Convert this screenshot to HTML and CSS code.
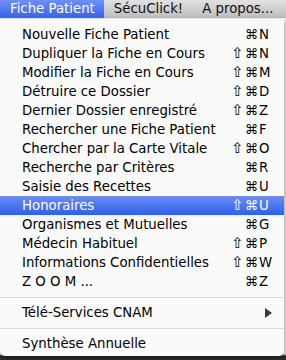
FILE: index.html
```html
<!DOCTYPE html>
<html lang="fr">
<head>
<meta charset="utf-8">
<title>Fiche Patient</title>
<link rel="stylesheet" href="styles.css">
</head>
<body>
<div class="menubar">
  <div class="bar-item active">Fiche Patient</div>
  <div class="bar-item">SécuClick!</div>
  <div class="bar-item">A propos...</div>
</div>
<div class="menu">
  <div class="row"><span class="label">Nouvelle Fiche Patient</span><span class="mods">⌘</span><span class="key">N</span></div>
  <div class="row"><span class="label">Dupliquer la Fiche en Cours</span><span class="mods"><span class="shift">⇧</span>⌘</span><span class="key">N</span></div>
  <div class="row"><span class="label">Modifier la Fiche en Cours</span><span class="mods"><span class="shift">⇧</span>⌘</span><span class="key">M</span></div>
  <div class="row"><span class="label">Détruire ce Dossier</span><span class="mods"><span class="shift">⇧</span>⌘</span><span class="key">D</span></div>
  <div class="row"><span class="label">Dernier Dossier enregistré</span><span class="mods"><span class="shift">⇧</span>⌘</span><span class="key">Z</span></div>
  <div class="row"><span class="label">Rechercher une Fiche Patient</span><span class="mods">⌘</span><span class="key">F</span></div>
  <div class="row"><span class="label">Chercher par la Carte Vitale</span><span class="mods"><span class="shift">⇧</span>⌘</span><span class="key">O</span></div>
  <div class="row"><span class="label">Recherche par Critères</span><span class="mods">⌘</span><span class="key">R</span></div>
  <div class="row"><span class="label">Saisie des Recettes</span><span class="mods">⌘</span><span class="key">U</span></div>
  <div class="row selected"><span class="label">Honoraires</span><span class="mods"><span class="shift">⇧</span>⌘</span><span class="key">U</span></div>
  <div class="row"><span class="label">Organismes et Mutuelles</span><span class="mods">⌘</span><span class="key">G</span></div>
  <div class="row"><span class="label">Médecin Habituel</span><span class="mods"><span class="shift">⇧</span>⌘</span><span class="key">P</span></div>
  <div class="row"><span class="label">Informations Confidentielles</span><span class="mods"><span class="shift">⇧</span>⌘</span><span class="key">W</span></div>
  <div class="row"><span class="label">Z O O M ...</span><span class="mods">⌘</span><span class="key">Z</span></div>
  <div class="sep"></div>
  <div class="row"><span class="label">Télé-Services CNAM</span><svg class="arrow" width="7" height="10" viewBox="0 0 7 10"><polygon points="0,0 7,5 0,10" fill="#3a3a3a"/></svg></div>
  <div class="sep"></div>
  <div class="row"><span class="label">Synthèse Annuelle</span></div>
</div>
</body>
</html>
```
FILE: styles.css
```css
html, body {
  margin: 0;
  padding: 0;
}
body {
  width: 286px;
  height: 360px;
  overflow: hidden;
  font-family: "DejaVu Sans", "Liberation Sans", sans-serif;
  font-size: 13.3px;
  color: #000;
  background: linear-gradient(to bottom, #ececec 0, #ececec 354px, #2e2e2e 356px, #2e2e2e 360px);
}
.menubar {
  display: flex;
  height: 18px;
  line-height: 18px;
  background: linear-gradient(to bottom, #e2e2e2, #bdbdbd);
  border-bottom: 1px solid #f4f4f4;
  color: #111;
}
.bar-item {
  padding: 0 9px 0 10px;
  white-space: nowrap;
}
.bar-item.active {
  color: #fff;
  background: linear-gradient(to bottom, #6f90f7, #3563ea);
}
.menu {
  width: 284px;
  padding: 6px 0 3px;
  background: #fafafa;
  border-radius: 0 0 5px 5px;
  box-shadow: 0 2px 5px rgba(0, 0, 0, 0.45);
}
.row {
  display: flex;
  align-items: center;
  height: 19px;
  line-height: 19px;
  padding: 0 11px 0 22px;
  white-space: nowrap;
}
.row.selected {
  color: #fff;
  background: linear-gradient(to bottom, #6c8ef7, #2f5fe9);
}
.label {
  flex: 1;
}
.mods {
  text-align: right;
}
.shift {
  font-size: 15px;
  margin-right: 1px;
}
.key {
  width: 14px;
  padding-left: 1px;
}
.arrow {
  margin-right: 1px;
}
.sep {
  height: 12px;
  display: flex;
  align-items: center;
}
.sep::before {
  content: "";
  flex: 1;
  height: 1px;
  background: #dadada;
}
```
